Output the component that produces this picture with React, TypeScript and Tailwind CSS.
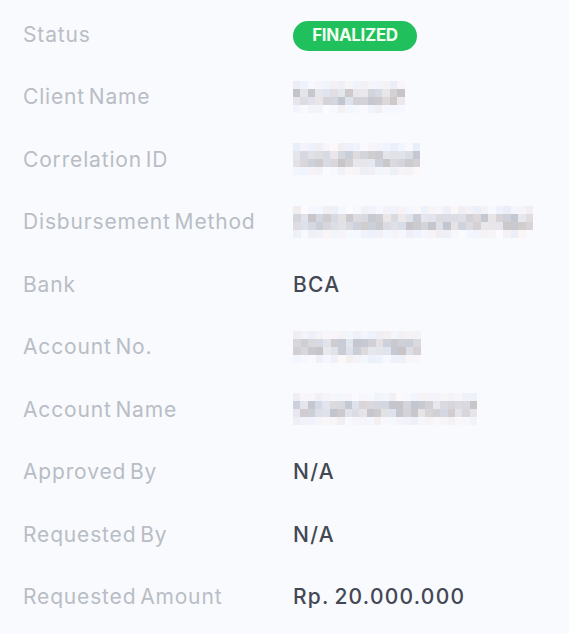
import React from "react";

function rand(seed: number) {
  let s = seed;
  return () => {
    s = (s * 16807) % 2147483647;
    return (s - 1) / 2147483646;
  };
}

const Mosaic = ({ cols, seed, width }: { cols: number; seed: number; width: number }) => {
  const r = rand(seed);
  const rows = 4;
  const cellW = width / cols;
  const cells: React.ReactNode[] = [];
  for (let y = 0; y < rows; y++) {
    for (let x = 0; x < cols; x++) {
      const edge = y === 0 || y === rows - 1;
      const base = edge ? 238 + r() * 12 : 196 + r() * 36;
      const v = Math.round(base);
      const tint = Math.round((r() - 0.5) * 10);
      cells.push(
        <div
          key={`${x}-${y}`}
          style={{
            width: cellW,
            height: 8,
            background: `rgb(${v + tint}, ${v}, ${Math.min(255, v + 6 - tint)})`,
          }}
        />
      );
    }
  }
  return (
    <div className="flex flex-wrap" style={{ width }}>
      {cells}
    </div>
  );
};

const rows: { label: string; value: React.ReactNode }[] = [
  {
    label: "Status",
    value: (
      <span className="inline-flex h-[30px] w-[124px] items-center justify-center rounded-full bg-[#20c05c] text-[17px] font-bold tracking-[-0.02em] text-[#f2fff0]">
        FINALIZED
      </span>
    ),
  },
  { label: "Client Name", value: <Mosaic cols={15} seed={11} width={112} /> },
  { label: "Correlation ID", value: <Mosaic cols={17} seed={23} width={127} /> },
  { label: "Disbursement Method", value: <Mosaic cols={32} seed={37} width={240} /> },
  { label: "Bank", value: "BCA" },
  { label: "Account No.", value: <Mosaic cols={17} seed={51} width={128} /> },
  { label: "Account Name", value: <Mosaic cols={25} seed={67} width={184} /> },
  { label: "Approved By", value: "N/A" },
  { label: "Requested By", value: "N/A" },
  { label: "Requested Amount", value: "Rp. 20.000.000" },
];

export default function App() {
  return (
    <div
      className="h-[634px] w-full bg-[#f8fafd] px-[23px] pt-[3px]"
      style={{ fontFamily: "Inter, 'Noto Sans', sans-serif" }}
    >
      {rows.map((row) => (
        <div key={row.label} className="flex h-[62.5px] items-center">
          <div className="w-[270px] shrink-0 text-[21px] tracking-[0.04em] text-[#b9bdc5] [word-spacing:-3px]">
            {row.label}
          </div>
          <div className="text-[21px] font-medium tracking-[0.06em] text-[#434854] [word-spacing:-2px]">
            {row.value}
          </div>
        </div>
      ))}
    </div>
  );
}
